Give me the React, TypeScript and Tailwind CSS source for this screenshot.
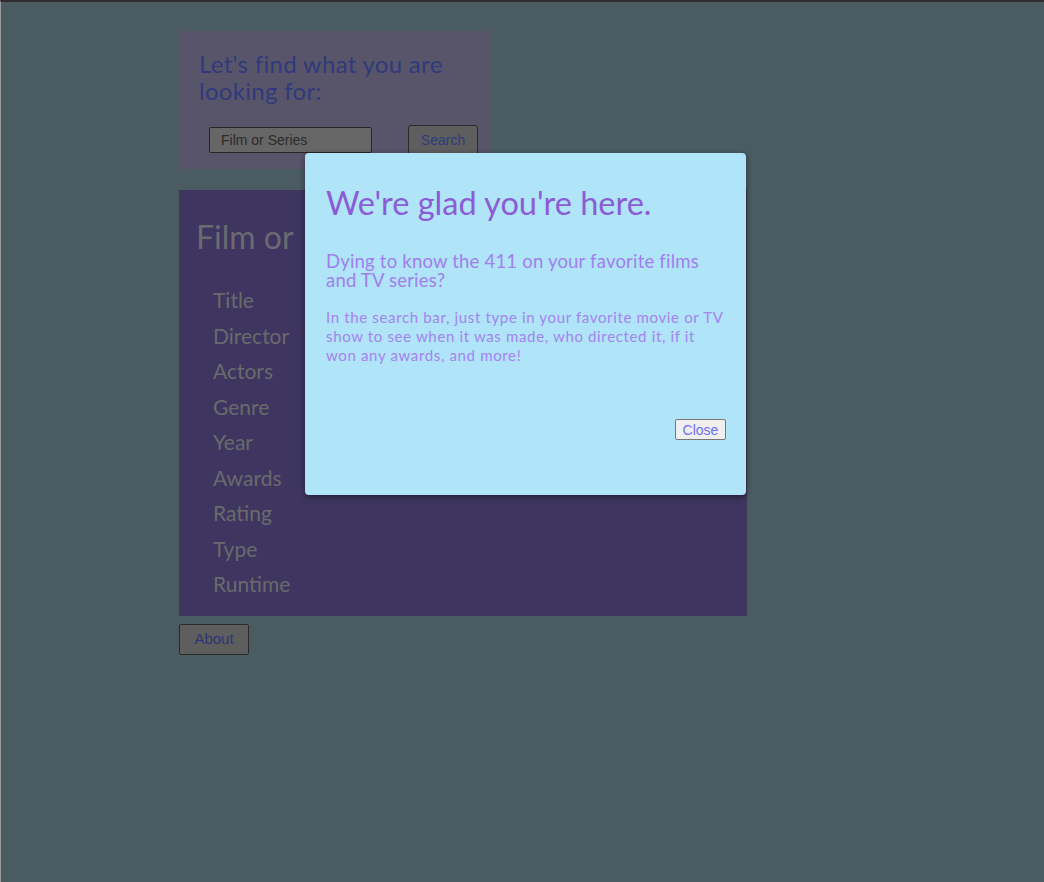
import React from 'react';

const fields = ['Title', 'Director', 'Actors', 'Genre', 'Year', 'Awards', 'Rating', 'Type', 'Runtime'];

// About modal shown over the dimmed search page
const AboutModal = () => (
  <div className="absolute left-[304px] top-[151px] w-[441px] h-[342px] bg-[#b0e4f8] rounded-[4px] shadow-[0_2px_6px_rgba(0,0,0,0.45)] pl-[21px] pr-[20px] pt-[30px] flex flex-col font-['Lato',sans-serif]">
    <h2 className="text-[32.5px] leading-[40px] text-[#8b5cd6] font-normal">We're glad you're here.</h2>
    <h3 className="mt-[29px] text-[18.5px] leading-[19px] text-[#a07ff0] tracking-[0.2px]">
      Dying to know the 411 on your favorite films and TV series?
    </h3>
    <p className="mt-[18px] text-[15px] leading-[19px] text-[#a583f1] tracking-[0.65px]">
      In the search bar, just type in your favorite movie or TV show to see when it was made, who directed it, if it won any awards, and more!
    </p>
    <div className="flex justify-end mt-[54px]">
      <button className="w-[51px] h-[21px] bg-[#efefef] border border-[#777] rounded-[2px] text-[14px] leading-none text-[#6e6ef5] font-['Liberation_Sans',Arial,sans-serif]">
        Close
      </button>
    </div>
  </div>
);

export default function App() {
  return (
    <div className="relative min-h-[882px] bg-[#4a5c62] border-t-[2px] border-t-[#2e2b30] border-l border-l-[#9a9a9a] font-['Lato',sans-serif]">
      <div className="pl-[178px] pt-[29px] flex flex-col items-start">
        {/* search box */}
        <section className="w-[310px] h-[138px] bg-[#58556a] pl-[20px] pr-[20px] pt-[19px]">
          <h1 className="text-[24px] leading-[27px] text-[#2f3a7c] tracking-[0.3px]">Let's find what you are looking for:</h1>
          <div className="flex items-center mt-[21px] pl-[10px]">
            <input
              className="shrink-0 w-[163px] h-[26px] bg-[#666] border border-[#262626] rounded-[2px] pl-[11px] text-[14px] text-[#2b2b2b] placeholder:text-[#2b2b2b] font-['Liberation_Sans',Arial,sans-serif] outline-none"
              placeholder="Film or Series"
            />
            <button className="shrink-0 ml-[36px] w-[70px] h-[30px] bg-[#5e5e5e] border border-[#2a2a2a] rounded-[3px] text-[14px] text-[#2f3a7c] font-['Liberation_Sans',Arial,sans-serif]">
              Search
            </button>
          </div>
        </section>

        {/* results panel */}
        <section className="mt-[21px] w-[568px] h-[426px] bg-[#3e3660] pt-[27px]">
          <h2 className="pl-[17px] text-[32px] leading-[40px] text-[#6b6a70] whitespace-nowrap">Film or</h2>
          <ul className="mt-[25px] pl-[34px]">
            {fields.map((f) => (
              <li key={f} className="text-[21px] leading-[35.5px] text-[#6a6a6c]">{f}</li>
            ))}
          </ul>
        </section>

        <button className="mt-[8px] w-[70px] h-[31px] bg-[#5e5e5e] border border-[#2a2a2a] rounded-[2px] text-[15px] text-[#2f3575] font-['Liberation_Sans',Arial,sans-serif]">
          About
        </button>
      </div>

      <AboutModal />
    </div>
  );
}
